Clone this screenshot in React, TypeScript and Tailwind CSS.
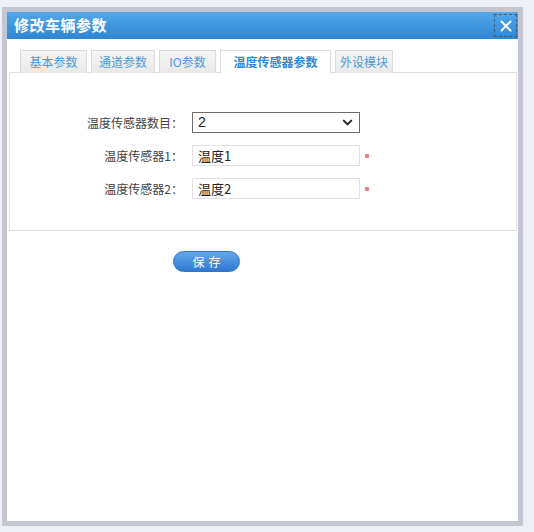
import { ChevronDown, X } from "lucide-react";

const font = { fontFamily: '"Noto Sans CJK SC", "Liberation Sans", sans-serif' };

const TABS = [
  { label: "基本参数", w: "w-[67px]" },
  { label: "通道参数", w: "w-[64px]" },
  { label: "IO参数", w: "w-[57px]" },
  { label: "温度传感器参数", w: "w-[111px]", active: true },
  { label: "外设模块", w: "w-[58px]" },
];

function Row({ label, children, required }: { label: string; children: React.ReactNode; required?: boolean }) {
  return (
    <div className="flex items-center h-[21px]">
      <div className="w-[173px] text-right text-[12px] text-[#444]">{label}</div>
      <div className="ml-[9px] w-[168px] h-full">{children}</div>
      {required && <span className="ml-[5px] w-[4px] h-[4px] bg-[#e88080] rounded-[1px]" />}
    </div>
  );
}

export default function App() {
  return (
    <div className="w-[534px] h-[532px] bg-[#eef0f5] pt-[7px] pl-[2px]" style={font}>
      <div className="w-[521px] h-[519px] bg-[#c4c7d2] p-[5px]">
        <div className="w-full h-full bg-white flex flex-col">
          {/* 标题栏 */}
          <div className="h-[27px] bg-gradient-to-b from-[#52a8e8] to-[#2f86d4] flex items-center justify-between pl-[7px] pr-[1px]">
            <span className="text-white text-[15px] font-bold tracking-[0.5px]">修改车辆参数</span>
            <div className="w-[23px] h-[23px] border border-dashed border-[#3a5a80] flex items-center justify-center">
              <X size={18} strokeWidth={2.5} className="text-white" />
            </div>
          </div>

          <div className="pt-[11px] pl-[2px] pr-[1px]">
            {/* 选项卡 */}
            <div className="flex gap-[4px] pl-[11px] relative z-10 -mb-px">
              {TABS.map((t) => (
                <div
                  key={t.label}
                  className={`${t.w} h-[23px] flex items-center justify-center text-[12px] border border-b-0 ${
                    t.active
                      ? "bg-white border-[#dcdcdc] text-[#2f8ad8] font-bold"
                      : "bg-gradient-to-b from-[#f6f6f6] to-[#e9e9e9] border-[#dadada] text-[#4a9ad8] border-b"
                  }`}
                >
                  {t.label}
                </div>
              ))}
            </div>

            {/* 表单 */}
            <div className="h-[159px] border border-[#e2dde5] pt-[39px] flex flex-col gap-[12px]">
              <Row label="温度传感器数目：">
                <div className="h-full border border-[#6e6e6e] flex items-center justify-between pl-[5px] pr-[4px] text-[14px] text-[#222]">
                  <span style={{ fontFamily: '"Liberation Sans", sans-serif' }}>2</span>
                  <ChevronDown size={15} strokeWidth={3.2} className="text-[#222]" />
                </div>
              </Row>
              <Row label="温度传感器1：" required>
                <div className="h-full border border-[#e4dfe6] flex items-center pl-[5px] text-[13px] text-[#222]">温度1</div>
              </Row>
              <Row label="温度传感器2：" required>
                <div className="h-full border border-[#e4dfe6] flex items-center pl-[5px] text-[13px] text-[#222]">温度2</div>
              </Row>
            </div>

            <div className="pt-[20px] pl-[164px]">
              <button className="w-[67px] h-[21px] rounded-full bg-gradient-to-b from-[#62a8ee] to-[#2e78d0] border border-[#3274c4] text-white text-[12px] tracking-[4px] flex items-center justify-center pl-[4px]">
                保存
              </button>
            </div>
          </div>
        </div>
      </div>
    </div>
  );
}
